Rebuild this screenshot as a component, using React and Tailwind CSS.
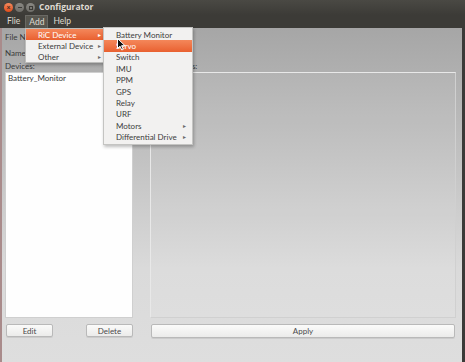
const addItems = ['RiC Device', 'External Device', 'Other'];

const ricItems = [
    { name: 'Battery Monitor' },
    { name: 'Servo', active: true },
    { name: 'Switch' },
    { name: 'IMU' },
    { name: 'PPM' },
    { name: 'GPS' },
    { name: 'Relay' },
    { name: 'URF' },
    { name: 'Motors', sub: true },
    { name: 'Differential Drive', sub: true },
];

function Arrow({ light }) {
    return (
        <span className={`text-[6px] leading-none ${light ? 'text-white' : 'text-[#6a6a6a]'}`}>▸</span>
    );
}

function Button({ label, className }) {
    return (
        <button
            className={`flex items-center justify-center rounded-[2px] border border-[#b9b9b9] bg-gradient-to-b from-[#fbfbfa] to-[#ebebea] text-[8px] text-[#4a4a4a] shadow-[0_1px_0_rgba(0,0,0,0.08)] ${className}`}
        >
            {label}
        </button>
    );
}

export default function App() {
    return (
        <div
            className="relative flex h-[362px] w-[465px] flex-col overflow-hidden bg-[#dedede] text-[#3c3c3c]"
            style={{ fontFamily: 'Lato, "Open Sans", sans-serif' }}
        >
            {/* Title bar */}
            <div className="flex h-[15px] items-center bg-gradient-to-b from-[#4a4944] to-[#3c3b37] pl-[4px]">
                <div className="flex items-center gap-[2px]">
                    <span className="flex h-[9px] w-[9px] items-center justify-center rounded-full bg-gradient-to-b from-[#f48a5c] to-[#df4b16] text-[7px] font-bold leading-none text-[#3a2a20]">
                        ×
                    </span>
                    <span className="flex h-[9px] w-[9px] items-center justify-center rounded-full bg-gradient-to-b from-[#8a8984] to-[#6e6d68]">
                        <span className="h-[1px] w-[4px] bg-[#3c3b37]" />
                    </span>
                    <span className="flex h-[9px] w-[9px] items-center justify-center rounded-full bg-gradient-to-b from-[#8a8984] to-[#6e6d68]">
                        <span className="h-[4px] w-[4px] border border-[#3c3b37]" />
                    </span>
                </div>
                <span className="ml-[4px] font-['Open_Sans'] text-[8.5px] font-bold text-[#dfdbd2]">Configurator</span>
            </div>

            {/* Menu bar */}
            <div className="flex h-[13px] items-stretch bg-[#3c3b37] pl-[3px] text-[8.5px] text-[#dfdbd2]">
                <span className="flex items-center px-[4px]">Flie</span>
                <span className="ml-[1px] flex items-center border-x border-t border-[#6a6964] bg-[#57564f] px-[3px]">Add</span>
                <span className="flex items-center px-[5px]">Help</span>
            </div>

            {/* Body */}
            <div className="flex flex-1 flex-col border-l-2 border-r-[3px] border-l-[#a98b8b] border-r-[#3b3a38] bg-gradient-to-b from-[#a6a6a6] via-[#dadada] via-72% to-[#dedede] pl-[3px] text-[8px] text-[#3a3a3a]">
                <div className="mt-[4px] flex h-[10px] items-center">File Name:</div>
                <div className="mt-[6px] flex h-[10px] items-center">Name:</div>
                <div className="mt-[3px] flex gap-[17px]">
                    <div className="flex w-[128px] flex-col">
                        <div className="flex h-[10px] items-center">Devices:</div>
                        <div className="mt-[1px] h-[246px] border border-[#cfcfcf] bg-[#fefefe] px-[2px] pt-[1px] leading-[9px]">
                            Battery_Monitor
                        </div>
                        <div className="mt-[6px] flex justify-between pl-[1px]">
                            <Button label="Edit" className="h-[13px] w-[47px]" />
                            <Button label="Delete" className="h-[13px] w-[47px]" />
                        </div>
                    </div>
                    <div className="flex w-[306px] flex-col">
                        <div className="flex h-[10px] items-center pl-[6px]">Commands:</div>
                        <div className="mt-[1px] h-[246px] border border-[#e8e8e8] border-b-[#d0d0d0] border-r-[#d0d0d0] bg-white/5" />
                        <div className="mt-[6px] pl-[1px]">
                            <Button label="Apply" className="h-[14px] w-[304px]" />
                        </div>
                    </div>
                </div>
            </div>

            {/* Add menu */}
            <div className="absolute left-[25px] top-[28px] w-[82px] border border-[#bdbdbb] bg-[#f2f1f0] text-[8px] shadow-[1px_2px_3px_rgba(0,0,0,0.25)]">
                {addItems.map((item, i) => (
                    <div
                        key={item}
                        className={`flex h-[11px] items-center justify-between pl-[12px] pr-[5px] ${i === 0 ? 'bg-gradient-to-b from-[#f4875a] to-[#e9602f] text-white' : 'text-[#3c3c3c]'}`}
                    >
                        <span>{item}</span>
                        <Arrow light={i === 0} />
                    </div>
                ))}
            </div>

            {/* RiC Device submenu */}
            <div className="absolute left-[103px] top-[27px] w-[90px] border border-[#c4c4c2] bg-[#f2f1f0] pb-[1px] pt-[1px] text-[8px] shadow-[1px_2px_3px_rgba(0,0,0,0.25)]">
                {ricItems.map((item) => (
                    <div
                        key={item.name}
                        className={`flex h-[11.4px] items-center justify-between pl-[12px] pr-[6px] ${item.active ? 'bg-gradient-to-b from-[#f4875a] to-[#e9602f] text-white' : 'text-[#3c3c3c]'}`}
                    >
                        <span>{item.name}</span>
                        {item.sub && <Arrow />}
                    </div>
                ))}
            </div>

            {/* Mouse cursor */}
            <svg className="absolute left-[117px] top-[38px]" width="9" height="13" viewBox="0 0 9 13">
                <path d="M0.5 0.5 L0.5 10.5 L3 8.2 L4.8 12 L6.3 11.3 L4.6 7.7 L8 7.7 Z" fill="#111" stroke="#fff" strokeWidth="1" />
            </svg>
        </div>
    );
}
